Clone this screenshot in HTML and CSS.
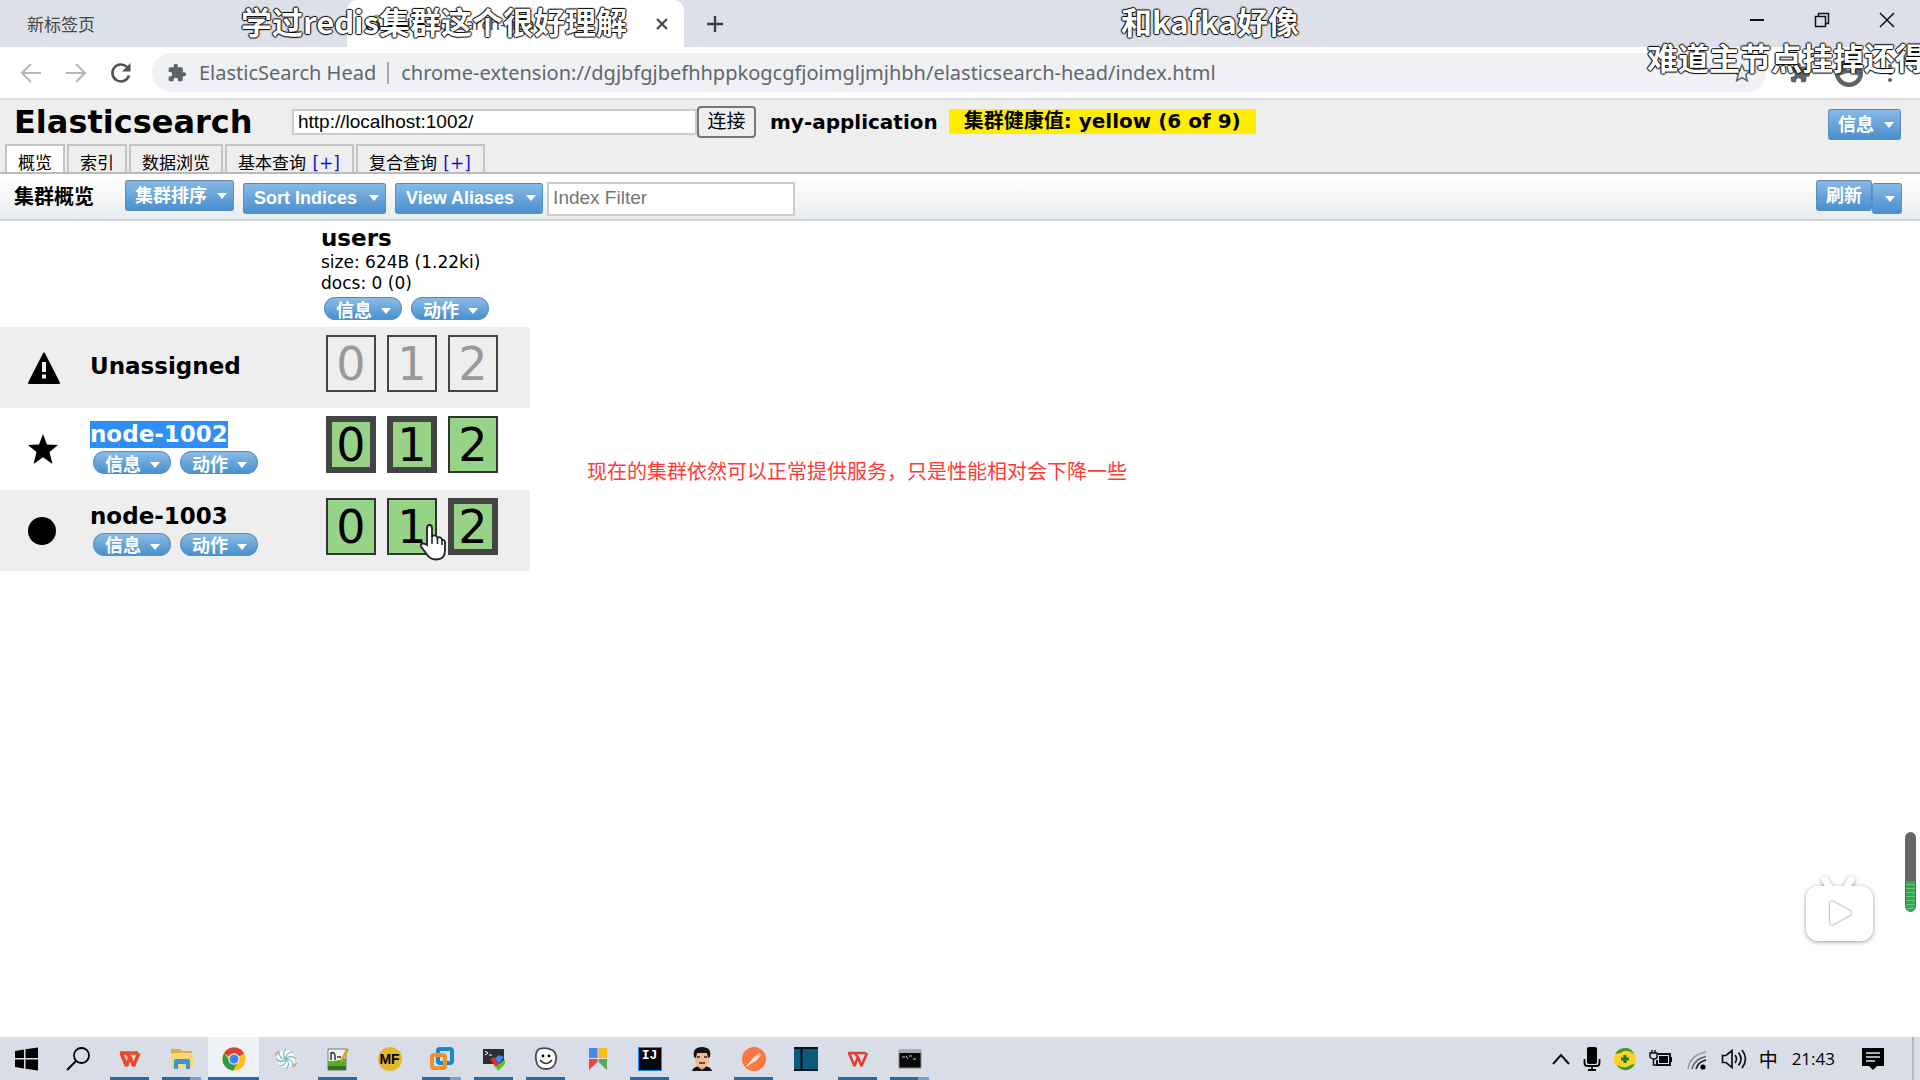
FILE: index.html
```html
<!DOCTYPE html>
<html lang="zh-CN">
<head>
<meta charset="utf-8">
<title>elasticsearch-head</title>
<link rel="stylesheet" href="styles.css">
</head>
<body>
<svg class="defs" aria-hidden="true">
  <symbol id="puzzle" viewBox="0 0 24 24"><path d="M20.5 11H19V7a2 2 0 0 0-2-2h-4V3.500a2.500 2.500 0 0 0-5 0V5H4a2 2 0 0 0-2 2v3.800h1.500a2.700 2.700 0 0 1 0 5.400H2V20a2 2 0 0 0 2 2h3.800v-1.500a2.700 2.700 0 0 1 5.400 0V22H17a2 2 0 0 0 2-2v-4h1.500a2.500 2.500 0 0 0 0-5z" fill="#5f6368"/></symbol>
</svg>

<header class="browser">
  <div class="tabstrip">
    <div class="btab idle">新标签页</div>
    <div class="btab current">
      <svg width="20" height="20" viewBox="0 0 20 20"><circle cx="8" cy="12" r="6" fill="none" stroke="#333" stroke-width="3"/><path d="M8 4q4-4 8 0" stroke="#8ab845" stroke-width="3" fill="none"/></svg>
      <span class="btab-title">elasticsearch-head</span>
      <button class="bare" aria-label="关闭标签页"><svg width="14" height="14" viewBox="0 0 14 14"><path d="M2 2l10 10M12 2L2 12" stroke="#3c4043" stroke-width="2"/></svg></button>
    </div>
    <button class="bare newtab" aria-label="新建标签页"><svg width="20" height="20" viewBox="0 0 20 20"><path d="M10 2v16M2 10h16" stroke="#3c4043" stroke-width="2.400"/></svg></button>
    <div class="winbtns">
      <button class="bare" aria-label="最小化"><svg width="16" height="16" viewBox="0 0 16 16"><path d="M1 8h14" stroke="#111" stroke-width="2"/></svg></button>
      <button class="bare" aria-label="还原"><svg width="16" height="16" viewBox="0 0 16 16"><path d="M1.500 4.500h10v10h-10zM4.500 4V1.500h10v10H12" stroke="#111" stroke-width="1.500" fill="none"/></svg></button>
      <button class="bare" aria-label="关闭"><svg width="16" height="16" viewBox="0 0 16 16"><path d="M1 1l14 14M15 1L1 15" stroke="#111" stroke-width="1.500"/></svg></button>
    </div>
  </div>
  <div class="navbar">
    <button class="bare" aria-label="后退"><svg width="22" height="22" viewBox="0 0 22 22"><path d="M21 11H2M11 2l-9 9 9 9" stroke="#b4b6b9" stroke-width="2" fill="none"/></svg></button>
    <button class="bare" aria-label="前进"><svg width="22" height="22" viewBox="0 0 22 22"><path d="M1 11h19M11 2l9 9-9 9" stroke="#b4b6b9" stroke-width="2" fill="none"/></svg></button>
    <button class="bare" aria-label="刷新页面"><svg width="22" height="22" viewBox="0 0 22 22"><path d="M19 13.500a8.500 8.500 0 1 1-2-8.500l2 2" stroke="#4e5257" stroke-width="2.500" fill="none"/><path d="M20.500 1v8.500H12z" fill="#4e5257"/></svg></button>
    <div class="omnibox">
      <svg width="20" height="20"><use href="#puzzle"/></svg>
      <span class="ext-name">ElasticSearch Head</span>
      <span class="url">chrome-extension://dgjbfgjbefhhppkogcgfjoimgljmjhbh/elasticsearch-head/index.html</span>
      <button class="bare star" aria-label="收藏"><svg width="20" height="20" viewBox="0 0 20 20"><path d="M10 2l2.400 5.500 5.900.500-4.500 3.900 1.400 5.800L10 14.600l-5.200 3.100 1.400-5.800L1.700 8l5.900-.5z" stroke="#5f6368" stroke-width="1.600" fill="none"/></svg></button>
    </div>
    <button class="bare" aria-label="扩展程序"><svg width="22" height="22"><use href="#puzzle"/></svg></button>
    <button class="bare" aria-label="用户"><svg width="30" height="30" viewBox="0 0 32 32"><circle cx="16" cy="16" r="15" fill="#5f6368"/><circle cx="16" cy="9" r="4" fill="#fff"/><path d="M6 19q10-6 20 0-3 7-10 7T6 19z" fill="#fff"/></svg></button>
    <button class="bare" aria-label="菜单"><svg width="6" height="20" viewBox="0 0 6 20"><circle cx="3" cy="3" r="2" fill="#5f6368"/><circle cx="3" cy="10" r="2" fill="#5f6368"/><circle cx="3" cy="17" r="2" fill="#5f6368"/></svg></button>
  </div>
</header>

<section class="app-head">
  <div class="connect">
    <h1>Elasticsearch</h1>
    <form class="connect-form">
      <input class="host" type="text" value="http://localhost:1002/" aria-label="集群地址"><button class="connect-btn" type="button">连接</button>
    </form>
    <span class="cluster">my-application</span>
    <span class="health">集群健康值: yellow (6 of 9)</span>
    <button class="btn info">信息<i class="caret"></i></button>
  </div>
  <nav class="tabs">
    <a class="tab active" href="#">概览</a>
    <a class="tab" href="#">索引</a>
    <a class="tab" href="#">数据浏览</a>
    <a class="tab" href="#">基本查询 <span class="plus">[+]</span></a>
    <a class="tab" href="#">复合查询 <span class="plus">[+]</span></a>
  </nav>
</section>

<div class="toolbar">
  <h2>集群概览</h2>
  <button class="btn raised">集群排序<i class="caret"></i></button>
  <button class="btn wide">Sort Indices<i class="caret"></i></button>
  <button class="btn wide">View Aliases<i class="caret"></i></button>
  <input class="filter" type="text" placeholder="Index Filter" aria-label="Index Filter">
  <div class="refresh"><button class="btn raised">刷新</button><button class="btn drop" aria-label="刷新选项"><i class="caret"></i></button></div>
</div>

<main class="content">
  <table class="cluster-table">
    <colgroup><col class="c-mark"><col class="c-name"><col class="c-index"></colgroup>
    <thead>
      <tr>
        <td colspan="2"></td>
        <th scope="col">
          <div class="name">users</div>
          <div class="stat">size: 624B (1.22ki)</div>
          <div class="stat">docs: 0 (0)</div>
          <div class="pills"><button class="pill">信息<i class="caret"></i></button><button class="pill">动作<i class="caret"></i></button></div>
        </th>
      </tr>
    </thead>
    <tbody>
      <tr>
        <td class="mark"><svg width="32" height="32" viewBox="0 0 32 32"><path d="M16 1.500L31 31H1z" fill="#000" stroke="#000" stroke-width="2" stroke-linejoin="round"/><path d="M14 10h4v10h-4zM14 22.500h4v4h-4z" fill="#eee"/></svg></td>
        <th scope="row"><div class="name">Unassigned</div></th>
        <td class="shards"><div class="shard-row"><button class="shard lost">0</button><button class="shard lost">1</button><button class="shard lost">2</button></div></td>
      </tr>
      <tr>
        <td class="mark"><svg width="30" height="30" viewBox="0 0 30 30"><path d="M15 0l4 10.500 11 .5-8.500 7L24.500 30 15 23.300 5.500 30l3-12L0 11l11-.5z"/></svg></td>
        <th scope="row"><div class="name"><span class="picked">node-1002</span></div>
          <div class="pills"><button class="pill">信息<i class="caret"></i></button><button class="pill">动作<i class="caret"></i></button></div></th>
        <td class="shards"><div class="shard-row"><button class="shard primary">0</button><button class="shard primary">1</button><button class="shard">2</button></div></td>
      </tr>
      <tr>
        <td class="mark"><svg width="28" height="28" viewBox="0 0 28 28"><circle cx="14" cy="14" r="14"/></svg></td>
        <th scope="row"><div class="name">node-1003</div>
          <div class="pills"><button class="pill">信息<i class="caret"></i></button><button class="pill">动作<i class="caret"></i></button></div></th>
        <td class="shards"><div class="shard-row"><button class="shard">0</button><button class="shard">1</button><button class="shard primary">2</button></div></td>
      </tr>
    </tbody>
  </table>
</main>

<footer class="taskbar">
  <button class="task" aria-label="开始"><svg width="24" height="24" viewBox="0 0 24 24"><path d="M1 4l9-1.500V11H1zM11.500 2.300L24 .5V11H11.500zM1 12.500h9v9L1 20zM11.500 12.500H24v11l-12.500-1.800z"/></svg></button>
  <button class="task" aria-label="搜索"><svg width="24" height="24" viewBox="0 0 24 24"><circle cx="15.500" cy="8.500" r="7.500" fill="none" stroke="#000" stroke-width="1.800"/><path d="M10 14l-9 9" stroke="#000" stroke-width="2"/></svg></button>
  <button class="task open" aria-label="WPS"><svg width="24" height="24" viewBox="0 0 24 24"><path d="M4 7h5l3 12h-3zM10 7h4l3 11-2 2z" fill="#f3b9a6"/><path d="M3 6l5.500 13L12 10l3.500 9L21 6M2 6h18M9 6l3 5" stroke="#e8482c" stroke-width="3.400" fill="none" stroke-linejoin="bevel"/></svg></button>
  <button class="task open multi" aria-label="文件资源管理器"><svg width="24" height="24" viewBox="0 0 24 24"><path d="M1 2h9l2 2h10v17H1z" fill="#e3ad3c"/><path d="M1 6h22v15H1z" fill="#f9d779"/><path d="M4 22v-8q0-2 2-2h12q2 0 2 2v8h-4v-5H8v5z" fill="#3c97cf"/></svg></button>
  <button class="task open now" aria-label="Chrome"><svg width="24" height="24" viewBox="0 0 24 24"><circle cx="12" cy="12" r="11.500" fill="#fbc116"/><path d="M12 12L2 6.300A11.500 11.500 0 0 1 22 6.300z" fill="#d8402f"/><path d="M2 6.300A11.500 11.500 0 0 0 11 23.500l5.500-9.500L12 12 8 14z" fill="#2f9b4c"/><path d="M12 6.300h10L12 12 2 6.300z" fill="#d8402f"/><circle cx="12" cy="12" r="5.700" fill="#eef"/><circle cx="12" cy="12" r="4.500" fill="#4285f4"/></svg></button>
  <button class="task" aria-label="截图工具"><svg width="24" height="24" viewBox="0 0 24 24"><circle cx="12" cy="12" r="9" fill="#f8fcfd"/><g fill="none" stroke="#7fb9c2" stroke-width="1.200"><path d="M12 12q-5-5 0-10M12 12q5-5 10 0M12 12q5 5 0 10M12 12q-5 5-10 0M12 12q0-7 7-7M12 12q7 0 7 7M12 12q0 7-7 7M12 12q-7 0-7-7"/></g><path d="M1 8l4-4M19 20l4-4" stroke="#d79a63" stroke-width="1.500"/></svg></button>
  <button class="task open" aria-label="Notepad++"><svg width="24" height="24" viewBox="0 0 24 24"><path d="M2 2h18v21H2z" fill="#f2f2ec" stroke="#777"/><path d="M2 14q9 1 18-3v12H2z" fill="#58ad25"/><path d="M2 19h18v4H2z" fill="#28781b"/><path d="M5 13V6q5-2 4 7M11 10h4" stroke="#333" stroke-width="1.500" fill="none"/><path d="M22 2l-7 12" stroke="#dca02a" stroke-width="2.500"/></svg></button>
  <button class="task" aria-label="MF"><span class="mf">MF</span></button>
  <button class="task open multi" aria-label="VMware"><svg width="24" height="24" viewBox="0 0 24 24"><rect x="8" y="2" width="14" height="14" rx="2" fill="none" stroke="#1988c8" stroke-width="4"/><rect x="2" y="8" width="13" height="13" rx="2" fill="none" stroke="#ef922c" stroke-width="4"/><path d="M8 10v4q0 2 2 2h3" stroke="#1988c8" stroke-width="3" fill="none"/></svg></button>
  <button class="task open" aria-label="MobaXterm"><svg width="24" height="24" viewBox="0 0 24 24"><path d="M1 2h21v15H1z" fill="#2c2e32"/><path d="M3 4l3 2-3 2M7 8h3" stroke="#fff" fill="none"/><path d="M8 12l4-2 5 7-3 4z" fill="#e32c28"/><path d="M13 11l4-3 5 2-5 7z" fill="#3a85ef"/><path d="M12 18l3 1 8-7v5l-7 7z" fill="#58c32c"/></svg></button>
  <button class="task open" aria-label="聊天"><svg width="24" height="24" viewBox="0 0 24 24"><path d="M5 2q7-2 13 1 5 3 4 10-1 9-10 9T2 13Q1 5 5 2z" fill="#fff" stroke="#484a50" stroke-width="1.800"/><circle cx="9" cy="9" r="1.400"/><circle cx="15" cy="9" r="1.400"/><path d="M6 13q6 7 12 0" stroke="#333" stroke-width="1.500" fill="none"/></svg></button>
  <button class="task" aria-label="书签"><svg width="24" height="24" viewBox="0 0 24 24"><path d="M3 1h8.500v10H3z" fill="#4a86ee"/><path d="M12.500 1H21v10h-8.500z" fill="#fbbf18"/><path d="M3 12h8.500v3L3 23z" fill="#e34b42"/><path d="M12.500 12H21v11l-8.500-8z" fill="#57a956"/></svg></button>
  <button class="task open" aria-label="IntelliJ IDEA"><span class="ij">IJ</span></button>
  <button class="task" aria-label="头像"><svg width="24" height="24" viewBox="0 0 24 24"><path d="M2 24q1-4 7-5h6q6 1 7 5z" fill="#111"/><path d="M9 17h6v4l-3 2-3-2z" fill="#c48d61"/><path d="M5 5h14v10q-2 6-7 6t-7-6z" fill="#edbd91"/><path d="M4 10Q2 0 12 0q10 0 8 10l-2 1-1-5H7l-1 5z" fill="#151312"/><path d="M7 10h3M14 10h3M9 16h6" stroke="#422" stroke-width="1.300"/></svg></button>
  <button class="task open" aria-label="Postman"><svg width="24" height="24" viewBox="0 0 24 24"><circle cx="12" cy="12" r="12" fill="#ff7743"/><path d="M5 19l6-8 6-5 2 2-5 6z" fill="#ffd9c7"/><path d="M5 19l8-8" stroke="#fff" stroke-width="1.500"/></svg></button>
  <button class="task" aria-label="笔记本"><svg width="24" height="24" viewBox="0 0 24 24"><path d="M0 0h24v24H0z" fill="#0c5a7c"/><path d="M0 1h24M0 23h24M7.500 0v24" stroke="#02131c" stroke-width="2"/></svg></button>
  <button class="task open" aria-label="WPS 文字"><svg width="24" height="24" viewBox="0 0 24 24"><path d="M3 6l5.500 13L12 10l3.500 9L21 6M2 6h18M9 6l3 5" stroke="#df3f32" stroke-width="2.600" fill="none" stroke-linejoin="bevel"/></svg></button>
  <button class="task open multi" aria-label="命令提示符"><svg width="24" height="24" viewBox="0 0 24 24"><path d="M1 3h22v18H1z" fill="#080808" stroke="#888"/><path d="M1 3h22v3H1z" fill="#aaa"/><path d="M4 10h3M8 9l2 3M11 9h3M15 12h3" stroke="#ccc"/></svg></button>
  <div class="tray">
    <svg width="20" height="24" viewBox="0 0 20 24"><path d="M2 17l8-9 8 9" stroke="#111" stroke-width="2" fill="none"/></svg>
    <svg width="18" height="24" viewBox="0 0 18 24"><rect x="4" y="0" width="10" height="17" rx="2"/><path d="M1.500 12v4q0 3 3 3h9q3 0 3-3v-4M9 19v4M5 23h8" stroke="#000" stroke-width="1.800" fill="none"/></svg>
    <svg width="24" height="24" viewBox="0 0 24 24"><circle cx="12" cy="12" r="11" fill="#fbd325"/><path d="M2 7Q6 0 14 1q5 1 7 6-5-4-10-3-4 3-9 3zM22 17q-4 7-11 6-5-1-7-5 5 3 10 2 4-3 8-3z" fill="#3e9838"/><path d="M12 8v8M8 12h8" stroke="#1d7a26" stroke-width="3"/></svg>
    <svg width="24" height="24" viewBox="0 0 24 24"><path d="M1 6h7v4q0 2-3 2t-4-2zM3 3v3M6 3v3M4.500 12v6H8" stroke="#111" stroke-width="1.500" fill="none"/><path d="M9 7h12v11H8v-5" fill="none" stroke="#111" stroke-width="2"/><path d="M10 9h9v7h-9zM21 10h2v5h-2z"/></svg>
    <svg width="24" height="24" viewBox="0 0 24 24"><g fill="none" stroke-width="1.700"><path d="M3 22Q5 8 21 5" stroke="#999"/><path d="M7 22Q9 12 21 9.500" stroke="#666"/><path d="M11 22q2-7 10-9" stroke="#222"/></g><circle cx="18" cy="20" r="2.600"/></svg>
    <svg width="26" height="24" viewBox="0 0 26 24"><path d="M1.500 8.500H5l6-5v17l-6-5H1.500zM14 8q3 4 0 8M17.500 5.500q5 6.500 0 13M21 3q7 9 0 18" stroke="#111" stroke-width="1.700" fill="none"/></svg>
    <span class="ime">中</span>
    <span class="clock">21:43</span>
    <svg width="24" height="24" viewBox="0 0 24 24"><path d="M1 1h22v18h-7l-4 4-4-4H1z"/><path d="M5 6h14M5 10h14M5 14h9" stroke="#dfe3ea" stroke-width="1.500"/></svg>
  </div>
</footer>

<div class="danmaku d1">学过redis集群这个很好理解</div>
<div class="danmaku d2">和kafka好像</div>
<div class="danmaku d3">难道主节点挂掉还得</div>
<p class="note">现在的集群依然可以正常提供服务，只是性能相对会下降一些</p>
<svg class="pointer" width="32" height="38" viewBox="0 0 32 38"><path d="M9 22V5q0-3 2.500-3T14 5v9q1-2 3-1.500T19.500 15q1.500-1.500 3-.5t1.500 2.500q3-.5 3 2.500v8q0 9-9 9-6 0-9-5l-6-8q-1-3 2-3 2 0 4 1.500z" fill="#fff" stroke="#222" stroke-width="1.800"/><path d="M14 14v7M19.500 15v6M24 17v5" stroke="#222" stroke-width="1.500"/></svg>
<svg class="tv" width="80" height="80" viewBox="0 0 80 80"><path d="M25 11l5 8M51 11l-5 8" stroke="#fff" stroke-width="7" stroke-linecap="round"/><rect x="6" y="17" width="67" height="55" rx="12" fill="#fff"/><path class="play" d="M30 35q0-4 4-2l16 9q3 2 0 4l-16 9q-4 2-4-2z" fill="#fff"/></svg>
<div class="meter"></div>
</body>
</html>
```
FILE: styles.css
```css
* { box-sizing: border-box; }

body {
  margin: 0;
  min-height: 100vh;
  display: flex;
  flex-direction: column;
  position: relative;
  overflow-x: hidden;
  background: #fff;
  color: #000;
  font-family: "DejaVu Sans", "Noto Sans CJK SC", sans-serif;
  font-size: 17px;
}

button, input { font: inherit; color: inherit; margin: 0; }
h1, h2, p { margin: 0; }
svg { display: block; flex: none; }
.defs { position: absolute; width: 0; height: 0; }
.bare { border: 0; padding: 0; background: none; display: flex; align-items: center; }

/* browser chrome */
.browser { font-family: "Noto Sans", "Noto Sans CJK SC", sans-serif; border-bottom: 2px solid #dcdddf; }
.tabstrip { display: flex; align-items: center; height: 47px; background: #dde0e8; }
.btab { display: flex; align-items: center; height: 100%; font-size: 17px; color: #45484d; }
.btab.idle { width: 347px; padding-left: 27px; }
.btab.current { width: 337px; padding: 0 15px 0 18px; gap: 12px; background: #fff; border-radius: 10px 10px 0 0; }
.btab-title { flex: 1; }
.newtab { margin-left: 21px; }
.winbtns { display: flex; gap: 49px; margin-left: auto; padding: 0 25px 8px 0; }
.navbar { display: flex; align-items: center; gap: 23px; height: 51px; padding: 0 27px 0 20px; }
.omnibox {
  flex: 1;
  display: flex;
  align-items: center;
  height: 39px;
  margin-left: -3px;
  padding: 0 14px 0 15px;
  border-radius: 20px;
  background: #eff1f4;
  font-size: 20px;
  color: #62666b;
  white-space: nowrap;
}
.ext-name { margin-left: 12px; padding-right: 11px; line-height: 22px; border-right: 2px solid #a5a8ac; }
.url { margin-left: 12px; }
.star { margin-left: auto; }

/* application header */
.app-head { background: #eee; border-bottom: 2px solid #bbb; }
.connect { display: flex; align-items: center; height: 43px; padding: 0 19px 0 14px; font-size: 20px; font-weight: bold; }
h1 { width: 278px; font-size: 32px; line-height: 40px; }
.connect-form { display: flex; align-items: center; font: 19px "Liberation Sans", "Noto Sans CJK SC", sans-serif; }
.host { width: 405px; height: 26px; padding: 0 4px; border: 2px solid #ccc; background: #fff; }
.connect-btn { width: 59px; height: 32px; padding: 0; border: 2px solid #767676; border-radius: 4px; background: #efefef; line-height: 26px; }
.cluster { margin-left: 14px; }
.health { margin-left: 11px; padding: 0 15px; line-height: 25px; background: #fe0; }
.info { margin: 9px 0 0 auto; align-self: flex-start; }
.tabs { display: flex; gap: 2px; padding: 1px 5px 0; }
.tab {
  height: 28px;
  padding: 0 11px;
  border: 2px solid #c4c4c4;
  border-bottom: 0;
  overflow: hidden;
  line-height: 34px;
  color: #000;
  text-decoration: none;
}
.tab.active { background: #fff; }
.plus { margin: 0 1px; color: #11c; }

/* buttons */
.btn {
  height: 31px;
  padding: 0 6px 0 9px;
  border: 1px solid #5a8fc0;
  border-top-color: #68809a;
  border-radius: 3px;
  background: linear-gradient(#86b9e6, #4a8fcd);
  color: #fff;
  font: bold 18px/28px "Liberation Sans", "Noto Sans CJK SC", sans-serif;
  display: flex;
  align-items: center;
  gap: 10px;
  white-space: nowrap;
}
.wide { padding: 0 6px 2px 10px; gap: 12px; }
.caret { flex: none; border: 5px solid transparent; border-top: 6px solid #fff; border-bottom: 0; }

.toolbar { display: flex; align-items: flex-end; gap: 9px; height: 47px; padding: 0 18px 5px 14px; border-bottom: 2px solid #d3d6d9; background: linear-gradient(#fff, #e9edef); }
h2 { width: 102px; font-size: 20px; line-height: 34px; }
.raised { margin-bottom: 3px; }
.filter { width: 248px; height: 34px; margin: 0 0 -2px -5px; padding: 0 4px 3px; border: 2px solid #ccc; background: #fff; font: 19px "Liberation Sans", sans-serif; }
.filter::placeholder { color: #757575; opacity: 1; }
.refresh { display: flex; align-items: flex-end; margin-left: auto; }
.refresh .raised { padding: 0 9px; }
.drop { padding: 0 6px 0 12px; }

/* cluster overview */
.content { flex: 1; }
.cluster-table { width: 530px; border-collapse: collapse; table-layout: fixed; }
.c-mark { width: 90px; }
.c-name { width: 231px; }
.c-index { width: 209px; }
.cluster-table th, .cluster-table td { padding: 0; text-align: left; vertical-align: middle; }
.cluster-table thead th { height: 106px; padding-top: 4px; vertical-align: top; }
.cluster-table tbody tr { height: 81px; }
.cluster-table tbody tr:nth-child(even) { height: 82px; }
.cluster-table tbody tr:nth-child(odd) { background: #eee; }
.cluster-table .mark { padding-left: 28px; }
.cluster-table .shards { padding: 8px 0 0 5px; vertical-align: top; }
.name { font-size: 23px; line-height: 27px; font-weight: bold; }
.stat { font-weight: normal; line-height: 21px; }
.cluster-table tbody th { padding-bottom: 3px; }
.picked { display: inline-block; background: #2c8ef8; color: #fff; }
.pills { display: flex; gap: 9px; padding: 3px 3px 0; }
.pill {
  display: flex;
  gap: 9px;
  align-items: center;
  height: 23px;
  padding: 5px 10px 0 11px;
  border: 1px solid #5a8fc0;
  border-top-color: #6887a8;
  border-radius: 12px;
  overflow: hidden;
  background: linear-gradient(#8abce8, #4a90cd);
  color: #fff;
  font: bold 18px/21px "Liberation Sans", "Noto Sans CJK SC", sans-serif;
  white-space: nowrap;
}
.shard-row { display: flex; gap: 11px; }
.shard { width: 50px; height: 57px; padding: 0; border: 2px solid #333; background: #96d387; font-size: 46px; line-height: 50px; }
.shard.primary { border: 6px solid #444; line-height: 44px; }
.shard.lost { border-color: #444; background: #eee; color: #999; }

/* taskbar */
.taskbar { display: flex; height: 43px; background: #d8dde7; }
.task { position: relative; flex: none; width: 51px; height: 43px; margin-right: 1px; padding: 0; border: 0; background: none; display: flex; align-items: center; justify-content: center; }
.task.now { background: #eef1f6; }
.task.open::after { content: ""; position: absolute; left: 6px; right: 6px; bottom: 0; height: 3px; background: #2a67a3; }
.task.now::after { left: 0; right: 0; }
.task.multi::after { background: linear-gradient(90deg, #2a67a3 72%, #7f9fc6 72%); }
.mf { width: 24px; border-radius: 12px; background: #e2b82b; font: bold 14px/24px "Liberation Sans", sans-serif; text-align: center; }
.ij { width: 24px; padding-bottom: 6px; border: 1px solid #1686f5; background: #05070d; color: #fff; font: bold 13px/16px "Liberation Mono", monospace; text-align: center; }
.tray { display: flex; align-items: center; gap: 12px; margin-left: auto; margin-right: 6px; padding-right: 27px; border-right: 2px solid #b3b9c4; font-family: "Open Sans", "Noto Sans CJK SC", sans-serif; }
.ime { font-size: 19px; }
.clock { margin: 0 14px 0 2px; }

/* overlays above the page */
.danmaku {
  position: absolute;
  white-space: nowrap;
  color: #fff;
  font: bold 31px/42px "Noto Sans CJK SC", sans-serif;
  text-shadow: 1px 0 1px #000, -1px 0 1px #000, 0 1px 1px #000, 0 -1px 1px #000;
}
.d1 { left: 241px; top: 0; }
.d2 { left: 1121px; top: 0; }
.d3 { left: 1647px; top: 36px; }
.note { position: absolute; left: 587px; top: 456px; font: 20px/30px "Noto Sans CJK SC", sans-serif; color: #ff3b38; white-space: nowrap; }
.pointer { position: absolute; left: 418px; top: 523px; }
.tv { position: absolute; right: 40px; top: 869px; filter: drop-shadow(0 1px 2px rgba(0, 0, 0, .4)); }
.play { filter: drop-shadow(0 0 1px rgba(0, 0, 0, .6)); }
.meter { position: absolute; right: 4px; top: 832px; width: 11px; height: 80px; border: 1px solid #666; border-radius: 6px; background: linear-gradient(#666 62%, transparent 62%), repeating-linear-gradient(#32a852 0 3px, #69c67e 3px 4px); }
```
